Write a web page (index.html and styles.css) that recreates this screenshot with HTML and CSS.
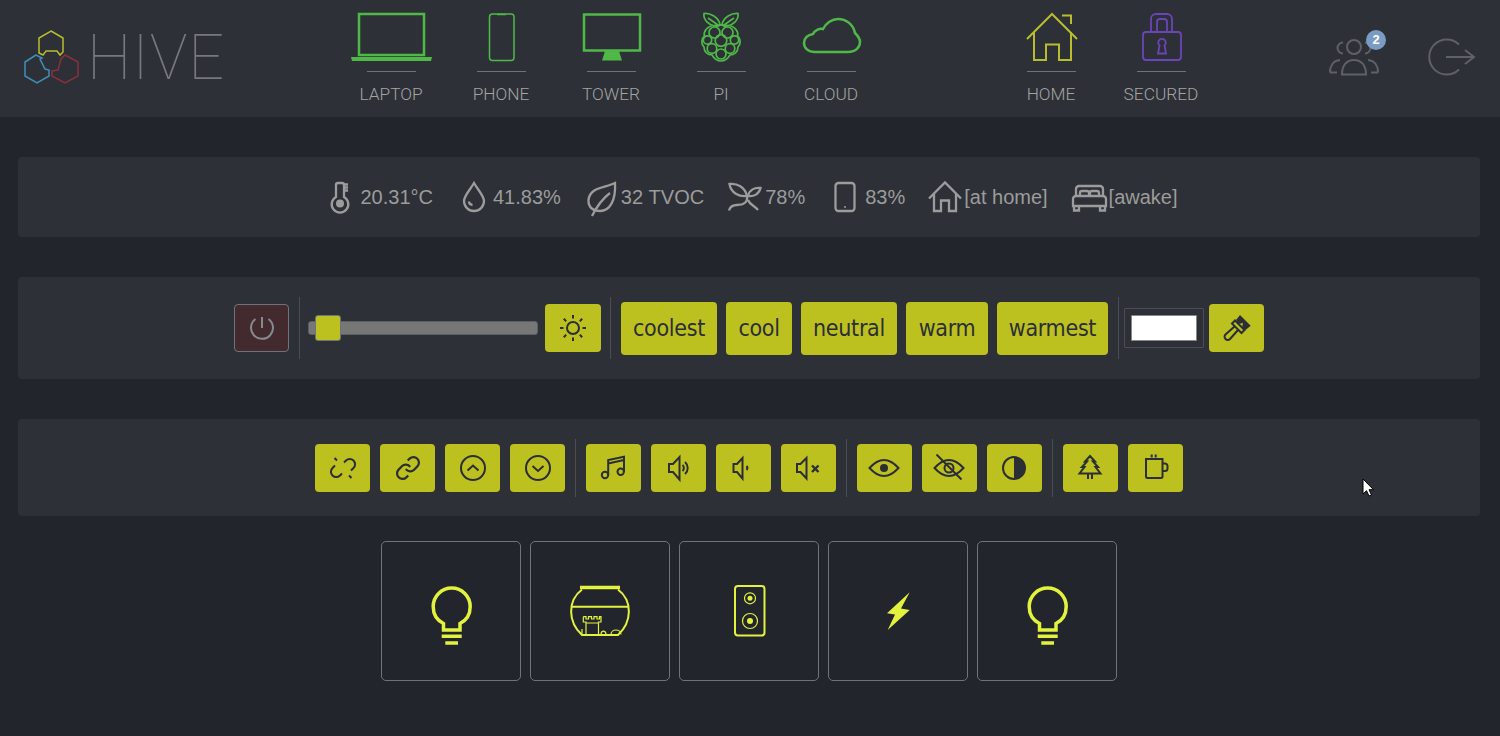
FILE: index.html
```html
<!DOCTYPE html>
<html lang="en">
<head>
<meta charset="utf-8">
<title>Hive</title>
<link rel="stylesheet" href="styles.css">
</head>
<body>
<header class="topbar">
  <div class="brand">
    <svg class="brand-mark" viewBox="0 0 88 117" width="88" height="117">
      <path class="hex-y" d="M51 31L63 38V52L60 55L57 51H46L43 55L39 53V38Z"/>
      <path class="hex-b" d="M36 55L25 62V76L37 83L49 76V70L45 69L40 59L42 58Z"/>
      <path class="hex-r" d="M65 55L78 62V76L65 83L52 76V71L58 70L61 59Z"/>
    </svg>
    <span class="brand-name">HIVE</span>
  </div>
  <nav class="nav">
    <a class="nav-item">
      <svg class="nav-icon green" viewBox="336 12 110 50"><rect x="359" y="14" width="65" height="41"/><path class="solid" d="M351 57H432L431 61H352Z"/></svg>
      <span class="nav-rule"></span><span class="nav-label">Laptop</span>
    </a>
    <a class="nav-item">
      <svg class="nav-icon green thin" viewBox="446 12 110 50"><rect x="489.5" y="14" width="24.500" height="46.500" rx="3"/><path d="M497 14.500h9"/></svg>
      <span class="nav-rule"></span><span class="nav-label">Phone</span>
    </a>
    <a class="nav-item">
      <svg class="nav-icon green" viewBox="556 12 110 50"><rect x="584" y="14.500" width="56" height="36"/><path class="solid" d="M605 51H619L622 60.500H602Z"/></svg>
      <span class="nav-rule"></span><span class="nav-label">Tower</span>
    </a>
    <a class="nav-item">
      <svg class="nav-icon green pi" viewBox="-55 -25 110 50">
        <path d="M-1 -12C-2 -20 -11 -24 -17 -23.500C-18 -17 -12 -12 -6 -11C-4 -10.500 -2 -11 -1 -12Z"/>
        <path d="M1 -12C2 -20 11 -24 17 -23.500C18 -17 12 -12 6 -11C4 -10.500 2 -11 1 -12Z"/>
        <path d="M-13 -19L-3 -12M13 -19L3 -12"/>
        <path d="M-7 -11.500C-14 -11 -18 -5 -16.500 -1C-20 2 -20 7 -17 10C-17 15 -13 18 -9 18C-6 23 -2 24 0 24C2 24 6 23 9 18C13 18 17 15 17 10C20 7 20 2 16.500 -1C18 -5 14 -11 7 -11.500C4 -12 -4 -12 -7 -11.500Z"/>
        <circle cx="-6.500" cy="-4.500" r="5.500"/><circle cx="6.500" cy="-4.500" r="5.500"/><circle cx="0" cy="3.500" r="5.800"/>
        <circle cx="-13.500" cy="3" r="4.200"/><circle cx="13.500" cy="3" r="4.200"/>
        <circle cx="-9" cy="11.500" r="4.800"/><circle cx="9" cy="11.500" r="4.800"/><circle cx="0" cy="17" r="5"/>
      </svg>
      <span class="nav-rule"></span><span class="nav-label">Pi</span>
    </a>
    <a class="nav-item">
      <svg class="nav-icon green" viewBox="776 12 110 50"><path d="M815 52H848C856 52 860 47 860 42C860 38 857 35 855 33C853 24 846 19 838 19C832 19 826 23 823 29C820 28 815 30 813 34C808 35 804 38 804 43C804 48 808 52 815 52Z"/></svg>
      <span class="nav-rule"></span><span class="nav-label">Cloud</span>
    </a>
    <span class="nav-gap"></span>
    <a class="nav-item">
      <svg class="nav-icon olive" viewBox="996 12 110 50"><path d="M1027 39L1052 14L1077 39M1034 32V60H1046V44.500H1059V60H1071V32M1062 15.500H1071V24"/></svg>
      <span class="nav-rule"></span><span class="nav-label">Home</span>
    </a>
    <a class="nav-item">
      <svg class="nav-icon purple" viewBox="1106 12 110 50">
        <rect x="1143" y="32" width="38" height="28" rx="3"/>
        <path d="M1151 32V19a5 5 0 0 1 5-5H1167a5 5 0 0 1 5 5V32M1157 32V22a3 3 0 0 1 3-3H1164a3 3 0 0 1 3 3V32"/>
        <path d="M1159.500 45.500a3.800 3.800 0 1 1 5 0L1166 53.500H1158Z"/>
      </svg>
      <span class="nav-rule"></span><span class="nav-label">Secured</span>
    </a>
  </nav>
  <div class="account">
    <div class="users">
      <svg class="account-icon" viewBox="1326 26 64 62" width="64" height="62">
        <circle cx="1354" cy="47" r="7"/>
        <path d="M1342 74.500C1342 65 1347 60 1354 60C1361 60 1366 65 1366 74.500Z"/>
        <path d="M1343 42.500a5.500 5.500 0 1 0 0 11M1365 42.500a5.500 5.500 0 1 1 0 11"/>
        <path d="M1330 72.500C1330 66 1333 60.500 1340 60M1378 72.500C1378 66 1375 60.500 1368 60M1330 72.500H1337M1378 72.500H1371"/>
      </svg>
      <span class="badge">2</span>
    </div>
    <svg class="account-icon" viewBox="1425 26 54 62" width="54" height="62">
      <path d="M1459 44.500A17.500 17.500 0 1 0 1459 69.500M1446 57H1474M1465 50L1474 57L1465 64"/>
    </svg>
  </div>
</header>

<main class="content">
  <section class="panel readings">
    <div class="reading">
      <svg class="reading-icon" viewBox="321 177 36 40" width="36" height="40">
        <path d="M337 197V185a2 2 0 0 1 2-2H343a2 2 0 0 1 2 2V197a8.300 8.300 0 1 1-8 0Z"/>
        <path d="M345 184.500H349M345 187.500H349M345 190.500H349"/>
        <circle class="solid" cx="341" cy="203.500" r="4"/>
      </svg>
      <span>20.31°C</span>
    </div>
    <div class="reading">
      <svg class="reading-icon" viewBox="457 177 32 40" width="32" height="40">
        <path d="M474 183C470 190 464 196 464 201a10 10 0 0 0 20 0C484 196 478 190 474 183Z"/>
        <path d="M469 201.500q0 3 3.500 3.500"/>
      </svg>
      <span>41.83%</span>
    </div>
    <div class="reading">
      <svg class="reading-icon" viewBox="585 177 32 40" width="32" height="40">
        <path d="M615 183C605 188 590 187 588.500 200C588 208 594 211 600 211C610 211 616 200 615 183Z"/>
        <path d="M592 216C596 208 602 199 610 193"/>
      </svg>
      <span>32 TVOC</span>
    </div>
    <div class="reading">
      <svg class="reading-icon" viewBox="729 177 33 40" width="33" height="40">
        <path d="M730.500 184C738 183 746 187 748 196C740 197 732 193 730.500 184Z"/>
        <path d="M761.500 188C756 187 750 190 749 196C755 197 760 194 761.500 188Z"/>
        <path d="M748 196C749 202 745 205 738 205C734 205 731 207 730 210.500M749 200C751 205 755 205 759 210"/>
      </svg>
      <span>78%</span>
    </div>
    <div class="reading">
      <svg class="reading-icon" viewBox="829 177 32 40" width="32" height="40">
        <rect x="835.500" y="183" width="19" height="28" rx="3"/>
        <circle class="solid" cx="845" cy="207" r="1"/>
      </svg>
      <span>83%</span>
    </div>
    <div class="reading">
      <svg class="reading-icon" viewBox="929 177 31 40" width="31" height="40">
        <path d="M929 198.500L945 182.500L961 198.500M934 194V211H941V200.500H949V211H956V194"/>
      </svg>
      <span>[at home]</span>
    </div>
    <div class="reading">
      <svg class="reading-icon" viewBox="1071 177 33 40" width="33" height="40">
        <path d="M1075 196V189a3 3 0 0 1 3-3H1099a3 3 0 0 1 3 3V196"/>
        <path d="M1079 196V193a2 2 0 0 1 2-2H1086a2 2 0 0 1 2 2V196M1089 196V193a2 2 0 0 1 2-2H1096a2 2 0 0 1 2 2V196"/>
        <path d="M1072 206V199a3 3 0 0 1 3-3H1102a3 3 0 0 1 3 3V206ZM1073 206V210.500H1078V206M1099 206V210.500H1104V206"/>
      </svg>
      <span>[awake]</span>
    </div>
  </section>

  <section class="panel controls">
    <button class="btn btn-power" type="button">
      <svg class="glyph" viewBox="-16 -16 32 32"><path d="M0 -11V0M-6.500 -9A11 11 0 1 0 6.500 -9"/></svg>
    </button>
    <span class="rule rule-tall"></span>
    <input class="dimmer" type="range" min="0" max="100" value="3">
    <button class="btn btn-sun" type="button">
      <svg class="glyph" viewBox="-16 -16 32 32"><circle r="6"/><path d="M0 -13V-9.500M0 9.500V13M-13 0H-9.500M9.500 0H13M-9.200 -9.200L-6.800 -6.800M6.800 6.800L9.200 9.200M-9.200 9.200L-6.800 6.800M6.800 -6.800L9.200 -9.200"/></svg>
    </button>
    <span class="rule rule-tall rule-presets"></span>
    <div class="presets">
      <button class="btn btn-word w-coolest" type="button">coolest</button>
      <button class="btn btn-word w-cool" type="button">cool</button>
      <button class="btn btn-word w-neutral" type="button">neutral</button>
      <button class="btn btn-word w-warm" type="button">warm</button>
      <button class="btn btn-word w-warmest" type="button">warmest</button>
    </div>
    <span class="rule rule-tall rule-colour"></span>
    <input class="colour" type="color" value="#ffffff">
    <button class="btn btn-brush" type="button">
      <svg class="glyph" viewBox="-16 -16 32 32">
        <path class="solid" d="M3 -13L13.700 -2.300L8.500 2L5 -0.500L6 -5L1.500 -4L-1 -8Z"/>
        <path d="M-2 -7.500L7.500 2L4.500 5L-5 -4.500Z"/>
        <path d="M-2.500 -1.500L-11.500 6.500a3 3 0 0 0 4.500 4.500L1 2"/>
      </svg>
    </button>
  </section>

  <section class="panel actions">
    <button class="btn btn-act" type="button"><svg class="glyph" viewBox="-16 -16 32 32"><path d="M1 -5.500L3 -7.500a5.300 5.300 0 0 1 7.500 7.500L8 2.500M-1 5.500L-3 7.500a5.300 5.300 0 0 1-7.500-7.500L-8 -2.500M-8.500 -10L-6 -7.500M6 7.500L8.500 10"/></svg></button>
    <button class="btn btn-act" type="button"><svg class="glyph" viewBox="-16 -16 32 32"><path transform="scale(1.100) translate(-12 -12)" d="M10 13a5 5 0 0 0 7.540.54l3-3a5 5 0 0 0-7.070-7.070l-1.720 1.710M14 11a5 5 0 0 0-7.540-.54l-3 3a5 5 0 0 0 7.070 7.070l1.710-1.710"/></svg></button>
    <button class="btn btn-act" type="button"><svg class="glyph" viewBox="-16 -16 32 32"><circle r="12"/><path d="M-5.500 2.500L0 -2.500L5.500 2.500"/></svg></button>
    <button class="btn btn-act" type="button"><svg class="glyph" viewBox="-16 -16 32 32"><circle r="12"/><path d="M-5.500 -2L0 3L5.500 -2"/></svg></button>
    <span class="rule rule-act"></span>
    <button class="btn btn-act" type="button"><svg class="glyph" viewBox="-16 -16 32 32"><circle cx="-9" cy="7" r="3.200"/><circle cx="6.700" cy="3.700" r="3.200"/><path d="M-5.800 7V-8L10 -11.300V3.700M-5.800 -4.500L10 -8"/></svg></button>
    <button class="btn btn-act" type="button"><svg class="glyph" viewBox="-16 -16 32 32"><path d="M-10 -4H-6L0.500 -11V11.500L-6 4H-10ZM3.500 -3a4 4 0 0 1 0 6M6 -6a8 8 0 0 1 0 12"/></svg></button>
    <button class="btn btn-act" type="button"><svg class="glyph" viewBox="-16 -16 32 32"><path d="M-10.500 -4H-7L-1.500 -10V10.500L-7 4H-10.500ZM2.500 -2a3 3 0 0 1 0 4"/></svg></button>
    <button class="btn btn-act" type="button"><svg class="glyph" viewBox="-16 -16 32 32"><path d="M-11 -4H-7.500L-1.500 -10V10.500L-7.500 4H-11Z"/><path class="heavy" d="M4 -2.500L10.500 4M10.500 -2.500L4 4"/></svg></button>
    <span class="rule rule-act"></span>
    <button class="btn btn-act" type="button"><svg class="glyph" viewBox="-16 -16 32 32"><path d="M-14.500 0Q0 -16 14.500 0Q0 16 -14.500 0Z"/><circle class="solid" r="4"/></svg></button>
    <button class="btn btn-act" type="button"><svg class="glyph" viewBox="-16 -16 32 32"><path d="M-14.500 0Q0 -16 14.500 0Q0 16 -14.500 0Z"/><circle r="4.500"/><path d="M-12.500 -13.500L12.500 11.500"/></svg></button>
    <button class="btn btn-act" type="button"><svg class="glyph" viewBox="-16 -16 32 32"><circle r="11"/><path class="solid" d="M0 -11A11 11 0 0 1 0 11Z"/></svg></button>
    <span class="rule rule-act"></span>
    <button class="btn btn-act" type="button"><svg class="glyph" viewBox="-16 -16 32 32"><path d="M0 -12L5 -6.500H3L8 -1H5.500L10.500 5.500H-10.500L-5.500 -1H-8L-3 -6.500H-5ZM-2 5.500V11M2 5.500V11"/></svg></button>
    <button class="btn btn-act" type="button"><svg class="glyph" viewBox="-16 -16 32 32"><path d="M-9 -9H7.500V8.500a1.500 1.500 0 0 1-1.500 1.500H-7.500a1.500 1.500 0 0 1-1.500-1.500ZM7.500 -4.500H10a2.500 2.500 0 0 1 2.500 2.500V0.500a2.500 2.500 0 0 1-2.500 2.500H7.500M-3.300 -13.500V-10.500M0.700 -13.500V-10.500"/></svg></button>
  </section>

  <section class="tiles">
    <div class="tile">
      <svg class="tile-icon" viewBox="-40 -40 80 80">
        <path class="bold" d="M-7.500 19V12.500C-13.500 9.500 -17.800 3.500 -17.800 -4.500A18.500 18.500 0 0 1 19.200 -4.500C19.200 3.500 15 9.500 9 12.500V19Z"/>
        <path class="bold" d="M-9.300 25.300H10.700M-5.700 32H7"/>
      </svg>
    </div>
    <div class="tile">
      <svg class="tile-icon" viewBox="-40 -40 80 80">
        <path class="bold" d="M-20 -23.500H20"/>
        <path class="mid" d="M-18 -21.500C-33 -10 -32 11 -18 24H18C32 11 33 -10 18 -21.500M-28.500 -4.300H28.500"/>
        <path class="fine" d="M-16.700 5.700V11H-14V23.500M-16.700 5.700H-14V8H-11.500V5.700H-8.500V8H-6V5.700H-3V8H-0.500V5.700H1V11H-1.500V23.500M-14 12H-1.500M-18 23V18M1 23.500C1 19 6 19 6 23.500M11 23.500C11 17.500 21 17.500 21 23.500"/>
      </svg>
    </div>
    <div class="tile">
      <svg class="tile-icon" viewBox="-40 -40 80 80">
        <rect class="mid" x="-14" y="-25" width="29.500" height="49.500" rx="3"/>
        <circle class="fine" cx="1" cy="-12.700" r="5.500"/><circle class="fill" cx="1" cy="-12.700" r="2.500"/>
        <circle class="fine" cx="1" cy="10" r="7.500"/><circle class="fill" cx="1" cy="10" r="3"/>
      </svg>
    </div>
    <div class="tile">
      <svg class="tile-icon" viewBox="-40 -40 80 80">
        <path class="fill" d="M11.700 -18.700L-11 2.300L-3 3.500L-10.300 19L11.700 -1L3 -2.500Z"/>
      </svg>
    </div>
    <div class="tile">
      <svg class="tile-icon" viewBox="-40 -40 80 80">
        <path class="bold" d="M-7.500 19V12.500C-13.500 9.500 -17.800 3.500 -17.800 -4.500A18.500 18.500 0 0 1 19.200 -4.500C19.200 3.500 15 9.500 9 12.500V19Z"/>
        <path class="bold" d="M-9.300 25.300H10.700M-5.700 32H7"/>
      </svg>
    </div>
  </section>
</main>

<svg class="pointer" viewBox="0 0 12 19" width="12" height="19"><path d="M1 1V16L4.500 12.700L7 18L9.500 17L7 11.700H11.500Z"/></svg>
</body>
</html>
```

FILE: styles.css
```css
* { box-sizing: border-box; }

html, body { height: 100%; }

body {
  margin: 0;
  overflow: hidden;
  background: #23252d;
  font-family: "Liberation Sans", Arial, sans-serif;
  color: #9c9c9c;
}

svg { display: block; fill: none; }

/* top bar */
.topbar {
  display: flex;
  height: 117px;
  background: #2d3036;
}

.brand {
  display: flex;
  align-items: center;
  width: 336px;
  flex: none;
}

.brand-mark { flex: none; stroke-width: 1.500; }
.hex-y { stroke: #b8bd2e; }
.hex-b { stroke: #3f8fb8; }
.hex-r { stroke: #8a2f3e; }

.brand-name {
  margin: 0 0 3px -1px;
  font-family: Roboto, sans-serif;
  font-size: 63px;
  font-weight: 100;
  line-height: 1;
  letter-spacing: 1px;
  color: #76787c;
}

.nav {
  display: flex;
  padding-top: 12px;
}

.nav-item {
  display: flex;
  flex-direction: column;
  align-items: center;
  width: 110px;
}

.nav-gap { width: 110px; }

.nav-icon {
  width: 110px;
  height: 50px;
  stroke-width: 2.500;
}

.nav-icon.thin { stroke-width: 1.500; }
.nav-icon.pi { stroke-width: 1.700; }
.green { stroke: #4fb848; }
.green .solid { fill: #4fb848; stroke: none; }
.olive { stroke: #b8bd2e; stroke-width: 2; }
.purple { stroke: #6a45b8; stroke-width: 1.800; }

.nav-rule {
  width: 49px;
  height: 1px;
  margin-top: 9px;
  background: #707276;
}

.nav-label {
  margin-top: 13px;
  font-family: Roboto, sans-serif;
  font-size: 17.300px;
  font-weight: 300;
  line-height: 19px;
  text-transform: uppercase;
  color: #a4a4a4;
}

.account {
  display: flex;
  gap: 35px;
  margin-left: auto;
  padding: 26px 21px 0 0;
}

.users { position: relative; }

.account-icon { stroke: #5f6164; stroke-width: 2; }

.badge {
  position: absolute;
  left: 40px;
  top: 4px;
  width: 20px;
  height: 20px;
  border-radius: 50%;
  background: #7a9cc4;
  color: #fff;
  font: 700 13px/20px "Liberation Sans", sans-serif;
  text-align: center;
}

/* content */
.content {
  display: flex;
  flex-direction: column;
  gap: 40px;
  padding: 40px 20px 0 18px;
}

.panel {
  display: flex;
  justify-content: center;
  align-items: center;
  background: #2d3036;
  border-radius: 4px;
}

/* readings */
.readings { height: 80px; gap: 24px; }

.reading {
  display: flex;
  align-items: center;
  gap: 4px;
  font-size: 20px;
  font-kerning: none;
}

.reading-icon { overflow: visible; stroke: #9c9c9c; stroke-width: 2.300; }
.reading-icon .solid { fill: #9c9c9c; stroke: none; }

/* buttons */
.btn {
  display: flex;
  justify-content: center;
  align-items: center;
  flex: none;
  height: 48px;
  padding: 0;
  border: 0;
  border-radius: 4px;
  background: #bcc11f;
  color: #2c2e36;
}

.glyph {
  width: 32px;
  height: 32px;
  stroke: #2c2e36;
  stroke-width: 2;
}

.glyph .solid { fill: #2c2e36; stroke: none; }
.glyph .heavy { stroke-width: 2.400; }

.btn-power {
  width: 55px;
  background: #432a2f;
  border: 1px solid #6f737a;
}

.btn-power .glyph { stroke: #868a91; }

.rule {
  flex: none;
  width: 1px;
  background: #4a4d53;
}

.controls { height: 102px; }

.rule-tall { height: 62px; margin: 0 8px 0 10px; }
.rule-presets { margin: 0 10px 0 9px; }
.rule-colour { margin: 0 5px 0 10px; }
.rule-act { height: 58px; margin-right: 0.700px; }

/* slider */
.dimmer {
  flex: none;
  width: 230px;
  height: 26px;
  margin: 0 7px 0 0;
  appearance: none;
  background: transparent;
}

.dimmer::-webkit-slider-runnable-track {
  height: 14px;
  background: #777;
  border: 1px solid #5b5e62;
  border-radius: 3px;
}

.dimmer::-webkit-slider-thumb {
  appearance: none;
  width: 26px;
  height: 26px;
  margin-top: -7px;
  background: #bcc11f;
  border: 1px solid #6f737a;
  border-radius: 3px;
}

.btn-sun { width: 56px; }
.btn-brush { width: 55px; }

/* presets */
.presets { display: flex; gap: 9px; }

.btn-word {
  height: 53px;
  font-family: "DejaVu Sans Condensed", "DejaVu Sans", sans-serif;
  font-size: 23px;
  font-stretch: condensed;
  letter-spacing: -0.300px;
}

.w-coolest { width: 96px; }
.w-cool { width: 66px; }
.w-neutral { width: 96px; }
.w-warm { width: 82px; }
.w-warmest { width: 111px; }

/* colour picker */
.colour {
  flex: none;
  width: 80px;
  height: 40px;
  margin: 0 5px 0 0;
  padding: 6px;
  appearance: none;
  background: transparent;
  border: 1px solid #4a4d53;
  border-radius: 1px;
}

.colour::-webkit-color-swatch-wrapper { padding: 0; }
.colour::-webkit-color-swatch { border: 1px solid #888; border-radius: 1px; }

/* actions */
.actions { height: 97px; gap: 9.300px; }
.btn-act { width: 55.700px; }

/* tiles */
.tiles {
  display: flex;
  justify-content: center;
  gap: 9px;
  margin-top: -15px;
}

.tile {
  display: flex;
  justify-content: center;
  align-items: center;
  width: 140px;
  height: 140px;
  border: 1px solid #6f737a;
  border-radius: 5px;
}

.tile-icon { width: 80px; height: 80px; stroke: #e2f23f; }
.tile-icon .bold { stroke-width: 3.500; }
.tile-icon .mid { stroke-width: 2; }
.tile-icon .fine { stroke-width: 1.200; }
.tile-icon .fill { fill: #e2f23f; stroke: none; }

/* mouse pointer caught in the shot */
.pointer {
  position: absolute;
  left: 1362px;
  top: 478px;
  fill: #fff;
  stroke: #000;
  stroke-width: 1;
}
```
